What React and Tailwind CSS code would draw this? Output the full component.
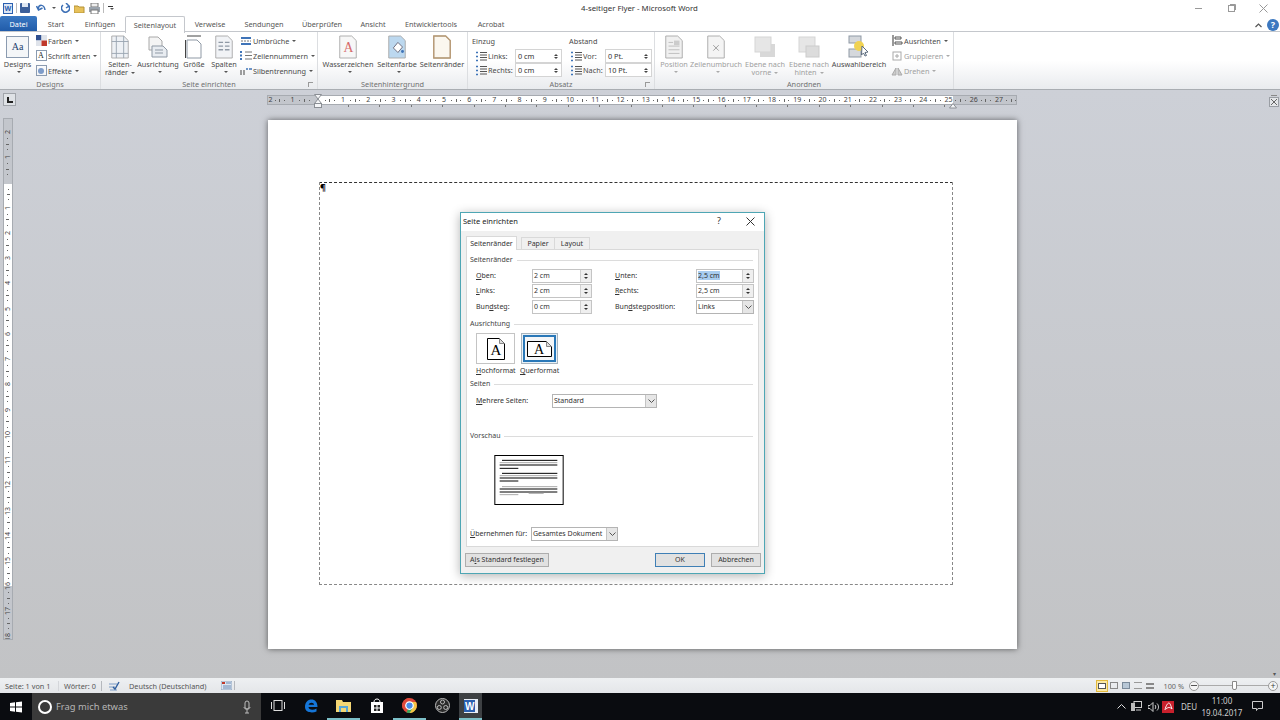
import React from 'react'

const ribbonTabs = [
  ['Start', 38], ['Einfügen', 50], ['Seitenlayout', 60], ['Verweise', 50], ['Sendungen', 58],
  ['Überprüfen', 58], ['Ansicht', 44], ['Entwicklertools', 72], ['Acrobat', 48],
]

const rulerNumbers = [2, 1, 0, 1, 2, 3, 4, 5, 6, 7, 8, 9, 10, 11, 12, 13, 14, 15, 16, 17, 18, 19, 20, 21, 22, 23, 24, 25, 26, 27]
const tabStops = Array.from({ length: 20 }, (_, i) => i)
const sideNumbers = [2, 1, 0, 1, 2, 3, 4, 5, 6, 7, 8, 9, 10, 11, 12, 13, 14, 15, 16, 17, 18]

function Caret({ muted }) {
  return <span className={`inline-block ml-[3px] align-middle border-x-[2px] border-t-[2px] border-x-transparent ${muted ? 'border-t-[#aaa]' : 'border-t-[#555]'}`} />
}

function Doc({ fold = '#fff', children }) {
  return (
    <svg width="22" height="24" viewBox="0 0 24 26">
      <path d="M3 1h13l5 5v19H3z" fill={fold} stroke="#a8a8a8" />
      {children}
    </svg>
  )
}

function BigButton({ w, lines, arrow, disabled, children }) {
  return (
    <div className={`flex flex-col items-center shrink-0 whitespace-nowrap ${disabled ? 'text-[#a0a0a0]' : 'text-[#4a4a4a]'}`} style={{ width: w }}>
      <div className="h-[26px] flex items-center justify-center">{children}</div>
      {lines.map((line, i) => (
        <div key={i} className="leading-[8px] h-[8px]">{line}{arrow && i === lines.length - 1 && lines.length > 1 ? <Caret muted={disabled} /> : null}</div>
      ))}
      {arrow && lines.length === 1 ? <div className="h-[6px] leading-[6px]"><Caret muted={disabled} /></div> : null}
    </div>
  )
}

function SmallItem({ icon, label, disabled }) {
  return (
    <div className={`h-[15px] flex items-center whitespace-nowrap ${disabled ? 'text-[#a0a0a0]' : 'text-[#4a4a4a]'}`}>
      <span className="w-[12px] h-[13px] mr-[1px] flex items-center justify-center shrink-0">{icon}</span>
      {label}<Caret muted={disabled} />
    </div>
  )
}

function Group({ w, label, launcher, children }) {
  return (
    <div className="h-[57px] flex flex-col border-r border-[#dcdee1] shrink-0 relative" style={{ width: w }}>
      <div className="h-[47px] pt-[2px] flex">{children}</div>
      <div className="h-[10px] leading-[10px] text-center text-[#707070]">{label}</div>
      {launcher ? <span className="absolute right-[4px] bottom-[2px] w-[5px] h-[5px] border-l border-t border-[#999]" /> : null}
    </div>
  )
}

function RibbonSpin({ value }) {
  return (
    <div className="w-[47px] h-[14px] border border-[#d4d4d4] bg-white flex items-center pl-[2px] text-[#333]">
      <span className="flex-1">{value}</span>
      <span className="w-[10px] flex flex-col items-center gap-[1px]">
        <span className="border-x-[2px] border-b-[2px] border-x-transparent border-b-[#444]" />
        <span className="border-x-[2px] border-t-[2px] border-x-transparent border-t-[#444]" />
      </span>
    </div>
  )
}

function LinesIcon({ color = '#555' }) {
  return (
    <svg width="12" height="11" viewBox="0 0 12 11">
      <path d="M1 1.5h2M1 5.5h2M1 9.5h2" stroke="#3f74b8" strokeWidth="1.4" />
      <path d="M5 1.5h7M5 4h7M5 6.5h7M5 9h7" stroke={color} />
    </svg>
  )
}

function Ribbon() {
  const dim = '#bbb'
  return (
    <div className="h-[58px] flex border-b border-[#a9adb2] bg-gradient-to-b from-white via-white to-[#e9ebee]">
      <Group w={101} label="Designs">
        <BigButton w={35} lines={['Designs']} arrow>
          <div className="w-[23px] h-[22px] border border-[#8b9bb0] bg-[#f4f6f8] flex items-center justify-center text-[10px] leading-none font-['Liberation_Serif',serif] text-[#24406d]">Aa</div>
        </BigButton>
        <div className="flex flex-col -mt-[1px]">
          <SmallItem label="Farben" icon={<svg width="11" height="11"><rect width="5.5" height="5.5" fill="#2f4f8f" /><rect x="5.5" width="5.5" height="5.5" fill="#dfe3ea" /><rect y="5.5" width="5.5" height="5.5" fill="#dfe3ea" /><rect x="5.5" y="5.5" width="5.5" height="5.5" fill="#c0392b" /></svg>} />
          <SmallItem label="Schrift arten" icon={<span className="w-[11px] h-[11px] border border-[#8b9bb0] text-[8px] leading-[10px] text-center font-['Liberation_Serif',serif] text-[#222]">A</span>} />
          <SmallItem label="Effekte" icon={<span className="w-[11px] h-[11px] border border-[#8b9bb0] flex items-center justify-center"><span className="w-[6px] h-[6px] rounded-full bg-[#7e9cc9]" /></span>} />
        </div>
      </Group>

      <Group w={217} label="Seite einrichten" launcher>
        <BigButton w={38} lines={['Seiten-', 'ränder']} arrow>
          <Doc fold="#eef1f5"><path d="M3 7h18M3 20h18M8 1v24M16 1v24" stroke="#9aa5b1" /></Doc>
        </BigButton>
        <BigButton w={38} lines={['Ausrichtung']} arrow>
          <svg width="20" height="22" viewBox="0 0 20 22"><path d="M1 1h9l4 4v9H1z" fill="#f4f4f4" stroke="#a8a8a8" /><path d="M4 10h11l4 4v7H4z" fill="#e8ecf1" stroke="#8f99a5" /><path d="M7 14h8M7 17h8" stroke="#8f99a5" /></svg>
        </BigButton>
        <BigButton w={34} lines={['Größe']} arrow>
          <svg width="18" height="24" viewBox="0 0 18 24"><path d="M2 1h14" stroke="#444" /><path d="M2 5h10l4 4v14H2z" fill="#fff" stroke="#8f99a5" /><path d="M.5 5v18" stroke="#444" /></svg>
        </BigButton>
        <BigButton w={26} lines={['Spalten']} arrow>
          <Doc fold="#f1f3f6"><path d="M6 8h5M6 12h5M6 16h5M13 8h5M13 12h5M13 16h5" stroke="#8f99a5" strokeWidth="1.5" /></Doc>
        </BigButton>
        <div className="flex flex-col pl-[3px] -mt-[1px]">
          <SmallItem label="Umbrüche" icon={<svg width="12" height="10"><path d="M1 2h10M1 8h10" stroke="#3f74b8" strokeWidth="2" /><path d="M1 5h10" stroke="#777" strokeDasharray="2 1" /></svg>} />
          <SmallItem label="Zeilennummern" icon={<svg width="12" height="11"><path d="M5 2h7M5 5.5h7M5 9h7" stroke="#777" /><path d="M1 1v9" stroke="#3f74b8" strokeWidth="2" strokeDasharray="2 1.5" /></svg>} />
          <SmallItem label="Silbentrennung" icon={<svg width="12" height="10"><path d="M1 9V4M4 9V4" stroke="#444" /><path d="M6 3h2M9 3h3" stroke="#3f74b8" strokeWidth="1.4" /></svg>} />
        </div>
      </Group>

      <Group w={150} label="Seitenhintergrund">
        <BigButton w={60} lines={['Wasserzeichen']} arrow>
          <Doc fold="#f7f7f7"><text x="7" y="19" fontSize="15" fill="#d66a6a" fontFamily="Liberation Serif">A</text></Doc>
        </BigButton>
        <BigButton w={38} lines={['Seitenfarbe']} arrow>
          <Doc fold="#bcd8ef"><path d="M8 14l5-6 5 5-5 6z" fill="#fff" stroke="#667" /><circle cx="18" cy="18" r="1.6" fill="#3f74b8" /></Doc>
        </BigButton>
        <BigButton w={52} lines={['Seitenränder']}>
          <Doc fold="#fbf7ef"><path d="M3 1h13l5 5v19H3z" fill="none" stroke="#b89a74" strokeWidth="1.5" /></Doc>
        </BigButton>
      </Group>

      <Group w={187} label="Absatz" launcher>
        <div className="w-[97px] shrink-0">
          <div className="h-[15px] leading-[15px] pl-[4px] text-[#4a4a4a]">Einzug</div>
          <div className="h-[14px] flex items-center pl-[7px] text-[#4a4a4a]"><span className="w-[12px]"><LinesIcon /></span><span className="w-[28px] pl-[1px]">Links:</span><RibbonSpin value="0 cm" /></div>
          <div className="h-[14px] flex items-center pl-[7px] text-[#4a4a4a]"><span className="w-[12px]"><LinesIcon /></span><span className="w-[28px] pl-[1px]">Rechts:</span><RibbonSpin value="0 cm" /></div>
        </div>
        <div className="w-[89px] shrink-0">
          <div className="h-[15px] leading-[15px] pl-[4px] text-[#4a4a4a]">Abstand</div>
          <div className="h-[14px] flex items-center pl-[5px] text-[#4a4a4a]"><span className="w-[12px]"><LinesIcon /></span><span className="w-[23px] pl-[1px]">Vor:</span><RibbonSpin value="0 Pt." /></div>
          <div className="h-[14px] flex items-center pl-[5px] text-[#4a4a4a]"><span className="w-[12px]"><LinesIcon /></span><span className="w-[23px] pl-[1px]">Nach:</span><RibbonSpin value="10 Pt." /></div>
        </div>
      </Group>

      <Group w={299} label="Anordnen">
        <BigButton w={38} lines={['Position']} arrow disabled>
          <Doc fold="#f0f0f0"><path d="M6 8h5M6 12h12M6 16h12M6 20h12" stroke={dim} /><rect x="12" y="6" width="6" height="5" fill="#ccc" /></Doc>
        </BigButton>
        <BigButton w={46} lines={['Zeilenumbruch']} arrow disabled>
          <Doc fold="#f4f4f4"><path d="M9 11l6 6M15 11l-6 6" stroke="#999" /></Doc>
        </BigButton>
        <BigButton w={52} lines={['Ebene nach', 'vorne']} arrow disabled>
          <svg width="22" height="22"><rect x="6" y="8" width="15" height="13" fill="#d8d8d8" /><rect x="1" y="1" width="16" height="15" fill="#e6e6e6" stroke="#d5d5d5" /></svg>
        </BigButton>
        <BigButton w={36} lines={['Ebene nach', 'hinten']} arrow disabled>
          <svg width="22" height="22"><rect x="1" y="1" width="16" height="15" fill="#e6e6e6" stroke="#d5d5d5" /><rect x="8" y="10" width="13" height="11" fill="#dcdcdc" stroke="#ccc" /></svg>
        </BigButton>
        <BigButton w={64} lines={['Auswahlbereich']}>
          <svg width="22" height="24" viewBox="0 0 22 24"><rect x="1" y="1" width="12" height="7" fill="#d5d8dc" stroke="#8f99a5" /><rect x="1" y="14" width="12" height="8" fill="#d5d8dc" stroke="#8f99a5" /><circle cx="11" cy="11" r="5" fill="#f0d252" /><path d="M14 11l6 6-3 .5 1.5 3-1.5.5-1.5-3-2 2z" fill="#fff" stroke="#5b6b7d" /></svg>
        </BigButton>
        <div className="flex flex-col -mt-[1px]">
          <SmallItem label="Ausrichten" icon={<svg width="11" height="11"><path d="M1 0v11" stroke="#333" /><path d="M3 2h6v2H3zM3 7h7v2H3z" fill="#fff" stroke="#555" /></svg>} />
          <SmallItem label="Gruppieren" disabled icon={<svg width="12" height="12"><rect x="2" y="2" width="8" height="8" fill="none" stroke="#aaa" /><path d="M4 6h4M6 4v4" stroke="#aaa" /></svg>} />
          <SmallItem label="Drehen" disabled icon={<svg width="12" height="11"><path d="M1 10l4-7v7zM7 10V3l4 7z" fill="#ccc" stroke="#aaa" /></svg>} />
        </div>
      </Group>
    </div>
  )
}

function Rulers() {
  return (
    <div className="w-[750px] relative">
      <div className="relative h-[10px] mt-[5px] border border-[#a7abb1] bg-white overflow-hidden flex">
        <div className="absolute left-0 top-0 bottom-0 w-[50px] bg-[#c3c6cc]" />
        <div className="absolute right-0 top-0 bottom-0 w-[63px] bg-[#c3c6cc]" />
        <div className="relative flex text-[7px] leading-[8px] text-[#444]">
          {rulerNumbers.map((n, i) => (
            <div key={i} className="shrink-0 flex items-center" style={{ width: i === 0 ? 19.5 : 25.24 }}>
              <span className={i === 0 ? 'w-[5px] text-center' : 'w-[10px] text-center'}>{n === 0 ? '' : n}</span>
              <span className="flex-1 flex justify-around items-center pr-[1px]">
                <span className="w-[1px] h-[1px] bg-[#666]" />
                <span className="w-[1px] h-[3px] bg-[#666]" />
                <span className="w-[1px] h-[1px] bg-[#666]" />
              </span>
            </div>
          ))}
        </div>
      </div>
      <svg width="8" height="14" className="absolute left-[47px] top-[-1px]">
        <path d="M.5.5h7L4 5zM4 5l3.500 4.500h-7z" fill="#f4f5f7" stroke="#8a8e94" />
        <rect x=".5" y="9.500" width="7" height="4" fill="#f4f5f7" stroke="#8a8e94" />
      </svg>
      <svg width="8" height="6" className="absolute left-[682px] top-[8px]">
        <path d="M4 .5l3.500 4.500h-7z" fill="#f4f5f7" stroke="#8a8e94" />
      </svg>
      <div className="h-[15px] pl-[81px] flex items-start">
        {tabStops.map((i) => (
          <div key={i} className="w-[31.4px] shrink-0"><span className="block w-[1px] h-[2px] bg-[#777]" /></div>
        ))}
      </div>
    </div>
  )
}

function SideRuler() {
  return (
    <div className="w-[10px] h-[522px] border border-[#a7abb1] bg-[#c3c6cc] mt-[12px] ml-[3px] overflow-hidden flex flex-col relative">
      <div className="absolute left-0 right-0 top-[65px] h-[402px] bg-white" />
      <div className="relative flex flex-col items-center text-[7px] leading-[8px] text-[#444] pt-[9px]">
        {sideNumbers.map((n, i) => (
          <div key={i} className="h-[25.24px] shrink-0 flex flex-col items-center">
            <span className="h-[8px] -rotate-90">{n === 0 ? '' : n}</span>
            <span className="flex-1 flex flex-col justify-around items-center pb-[1px]">
              <span className="w-[1px] h-[1px] bg-[#666]" />
              <span className="w-[3px] h-[1px] bg-[#666]" />
              <span className="w-[1px] h-[1px] bg-[#666]" />
            </span>
          </div>
        ))}
      </div>
    </div>
  )
}

function Heading({ children }) {
  return (
    <div className="h-[10px] flex items-center gap-[4px] pr-[5px] text-[#444]">
      <span className="whitespace-nowrap">{children}</span>
      <span className="flex-1 h-[1px] bg-[#dcdcdc]" />
    </div>
  )
}

function Spinner({ value, w, selected }) {
  return (
    <div className="h-[14px] border border-[#c4c4c4] bg-white flex items-center text-[#333]" style={{ width: w }}>
      <span className="flex-1 pl-[1px]"><span className={selected ? 'bg-[#a9cdf0]' : ''}>{value}</span></span>
      <span className="w-[11px] h-full border-l border-[#d0d0d0] bg-[#efefef] flex flex-col items-center justify-center gap-[2px]">
        <span className="border-x-[2px] border-b-[2px] border-x-transparent border-b-[#333]" />
        <span className="border-x-[2px] border-t-[2px] border-x-transparent border-t-[#333]" />
      </span>
    </div>
  )
}

function Combo({ value, w }) {
  return (
    <div className="h-[14px] border border-[#b4b4b4] bg-white flex items-center text-[#333] whitespace-nowrap" style={{ width: w }}>
      <span className="flex-1 pl-[1px]">{value}</span>
      <span className="w-[11px] h-full border-l border-[#c4c4c4] bg-[#e6e6e6] flex items-center justify-center">
        <svg width="7" height="4"><path d="M.5.5l3 3 3-3" fill="none" stroke="#555" /></svg>
      </span>
    </div>
  )
}

function DialogButton({ w, primary, children }) {
  return (
    <div className={`h-[14px] flex items-center justify-center border bg-[#e1e1e1] text-[#333] whitespace-nowrap ${primary ? 'border-[#3f7fb5]' : 'border-[#adadad]'}`} style={{ width: w }}>{children}</div>
  )
}

function PageDialog() {
  return (
    <div className="absolute left-[192px] top-[92px] w-[305px] h-[362px] border border-[#4ea6b4] bg-[#f0f0f0] shadow-[0_2px_10px_rgba(0,0,0,0.3)] flex flex-col text-[#333] text-[7px]">
      <div className="h-[18px] bg-white flex items-center pl-[2px] pb-[2px] shrink-0">
        <span className="flex-1 text-[#222] text-[7.5px]">Seite einrichten</span>
        <span className="w-[30px] mr-[2px] text-center text-[9px]">?</span>
        <span className="w-[28px] flex justify-center">
          <svg width="9" height="9"><path d="M.5.5l8 8M8.500.5l-8 8" stroke="#333" /></svg>
        </span>
      </div>

      <div className="flex-1 px-[5px] pt-[5px] flex flex-col">
        <div className="h-[13px] flex items-end">
          <div className="h-[14px] w-[51px] bg-white border border-b-0 border-[#d9d9d9] flex items-center justify-center relative z-10 -mb-[1px]">Seitenränder</div>
          <div className="h-[12px] w-[34px] ml-[4px] border border-b-0 border-[#d9d9d9] flex items-center justify-center">Papier</div>
          <div className="h-[12px] w-[35px] border border-b-0 border-l-0 border-[#d9d9d9] flex items-center justify-center">Layout</div>
        </div>
        <div className="h-[298px] bg-white border border-[#d9d9d9] pl-[3px] pt-[5px]">
          <Heading>Seitenränder</Heading>
          <div className="mt-[4px] pl-[6px] flex flex-col gap-[1px]">
            <div className="flex items-center">
              <span className="w-[56px]"><u>O</u>ben:</span><Spinner value="2 cm" w={60} />
              <span className="w-[81px] pl-[23px] box-content"><u>U</u>nten:</span><Spinner value="2,5 cm" w={58} selected />
            </div>
            <div className="flex items-center">
              <span className="w-[56px]"><u>L</u>inks:</span><Spinner value="2 cm" w={60} />
              <span className="w-[81px] pl-[23px] box-content"><u>R</u>echts:</span><Spinner value="2,5 cm" w={58} />
            </div>
            <div className="flex items-center mt-[1px]">
              <span className="w-[56px]">Bun<u>d</u>steg:</span><Spinner value="0 cm" w={60} />
              <span className="w-[81px] pl-[23px] box-content">Bun<u>d</u>stegposition:</span><Combo value="Links" w={58} />
            </div>
          </div>

          <div className="mt-[5px]"><Heading>Ausrichtung</Heading></div>
          <div className="mt-[4px] pl-[6px] flex gap-[6px]">
            <div className="w-[39px] h-[31px] border border-[#c4c4c4] bg-white flex items-center justify-center">
              <svg width="18" height="22" viewBox="0 0 18 22">
                <path d="M.5.500h12l5 5v16H.5z" fill="#fff" stroke="#000" />
                <path d="M12.500.500v5h5" fill="#ddd" stroke="#888" />
                <text x="9" y="17" textAnchor="middle" fontSize="15" fontFamily="Liberation Serif" fill="#000">A</text>
              </svg>
            </div>
            <div className="w-[37px] h-[31px] border border-[#a8b4be] bg-[#e8f1f8] flex items-center justify-center">
              <div className="w-[33px] h-[27px] border-2 border-[#2a78b8] bg-[#f4f6f8] flex items-center justify-center">
                <svg width="25" height="16" viewBox="0 0 25 16">
                  <path d="M.5.500h19l5 5v10H.5z" fill="#fff" stroke="#000" />
                  <path d="M19.500.500v5h5" fill="#ddd" stroke="#888" />
                  <text x="12" y="13" textAnchor="middle" fontSize="14" fontFamily="Liberation Serif" fill="#000">A</text>
                </svg>
              </div>
            </div>
          </div>
          <div className="h-[10px] mt-[2px] pl-[6px] flex leading-[10px] whitespace-nowrap">
            <span className="w-[44px]"><u>H</u>ochformat</span>
            <span><u>Q</u>uerformat</span>
          </div>

          <div className="mt-[3px]"><Heading>Seiten</Heading></div>
          <div className="mt-[5px] pl-[6px] flex items-center">
            <span className="w-[76px]"><u>M</u>ehrere Seiten:</span><Combo value="Standard" w={105} />
          </div>

          <div className="mt-[23px]"><Heading>Vorschau</Heading></div>
          <div className="mt-[14px] ml-[24px] w-[70px] h-[50px]">
            <svg width="70" height="50" viewBox="117 225 208 150" className="block">
              <rect x="118.5" y="226.5" width="205" height="147" fill="#fff" stroke="#000" strokeWidth="3" />
              <path d="M140 241h166M133 255h173M133 265h56M140 280h166M133 294h173M133 303h56M133 327h173M133 336h173" stroke="#000" strokeWidth="3" />
              <path d="M133 248h173M133 287h173M140 320h166M133 344h56M220 340h45" stroke="#aaa" strokeWidth="3" />
            </svg>
          </div>
          <div className="mt-[22px] flex items-center">
            <span className="w-[61px] whitespace-nowrap"><u>Ü</u>bernehmen für:</span><Combo value="Gesamtes Dokument" w={87} />
          </div>
        </div>
        <div className="pt-[6px] flex -ml-[1px] -mr-[2px]">
          <DialogButton w={84}>A<u>l</u>s Standard festlegen</DialogButton>
          <div className="ml-auto flex gap-[6px]">
            <DialogButton w={50} primary>OK</DialogButton>
            <DialogButton w={50}>Abbrechen</DialogButton>
          </div>
        </div>
      </div>
    </div>
  )
}

function Workspace() {
  return (
    <div className="h-[588px] flex bg-gradient-to-b from-[#cdd0d7] to-[#c2c3c5]">
      <div className="w-[267px] shrink-0">
        <div className="mt-[3px] ml-[3px] w-[13px] h-[13px] border border-[#a0a4aa] bg-[#dfe2e6] flex items-center justify-center">
          <span className="w-[6px] h-[6px] border-l-2 border-b-2 border-[#222]" />
        </div>
        <SideRuler />
      </div>
      <div className="w-[750px] shrink-0">
        <Rulers />
        <div className="relative ml-[1px] h-[529px] bg-white shadow-[0_0_6px_rgba(0,0,0,0.55)] pt-[62px] pl-[51px] pr-[64px]">
          <div className="h-[403px] border border-dashed border-[#888] border-t-[#333]">
            <div className="text-[9px] leading-[10px] font-bold text-black">¶</div>
          </div>
          <PageDialog />
        </div>
      </div>
      <div className="flex-1 flex flex-col items-end pr-[1px] pt-[5px]">
        <svg width="10" height="12"><rect x=".5" y="2.5" width="9" height="9" fill="#e4e6e9" stroke="#9a9ea4" /><path d="M2 4l6 6M8 4l-6 6" stroke="#666" /><path d="M2 .5h6" stroke="#888" /></svg>
        <div className="mt-auto mb-[1px] mr-[3px] text-[6px] leading-[6px] text-[#555]">▾</div>
      </div>
    </div>
  )
}

function StatusBar() {
  return (
    <div className="h-[15px] flex items-center bg-gradient-to-b from-[#eef0f2] to-[#e4e6e9] text-[#555] whitespace-nowrap">
      <span className="w-[58px] pl-[5px]">Seite: 1 von 1</span>
      <span className="w-[43px] pl-[5px] border-l border-[#d4d6da]">Wörter: 0</span>
      <span className="w-[27px] pl-[6px] border-l border-[#b5b8bd]">
        <svg width="12" height="10"><path d="M1 3h8M1 6h6M2 9h7" stroke="#7d9cc5" /><path d="M5 6l2 2 4-7" fill="none" stroke="#2f5f9f" strokeWidth="1.4" /></svg>
      </span>
      <span className="w-[91px] pl-[1px]">Deutsch (Deutschland)</span>
      <span className="w-[16px] flex justify-center border-r border-[#b5b8bd] pr-[1px]">
        <svg width="11" height="9"><rect width="11" height="9" fill="#dce6f2" stroke="#8fa5bf" /><rect x="1" y="1" width="3" height="2" fill="#c0392b" /><path d="M5 2h5M2 5h8M2 7h8" stroke="#6d8cb5" /></svg>
      </span>

      <div className="ml-auto flex items-center pr-[2px]">
        <span className="w-[12px] h-[12px] border border-[#e3b93c] bg-[#fbe9a8] flex items-center justify-center">
          <span className="w-[8px] h-[6px] border border-[#555] bg-white" />
        </span>
        <span className="w-[12px] flex justify-center"><span className="w-[8px] h-[7px] border border-[#888]" /></span>
        <span className="w-[12px] flex justify-center"><span className="w-[8px] h-[7px] border border-[#7a8a9a] bg-[#b7c7d6]" /></span>
        <span className="w-[12px] flex justify-center"><span className="w-[8px] h-[7px] border-y border-[#999]" /></span>
        <span className="w-[12px] flex justify-center"><span className="w-[8px] h-[6px] border-y-2 border-[#888]" /></span>
        <span className="w-[33px] text-right pr-[5px] text-[#666]">100 %</span>
        <div className="w-[89px] flex items-center">
          <span className="w-[10px] h-[10px] rounded-full border border-[#999] bg-[#f5f5f5] flex items-center justify-center"><span className="w-[6px] h-[1px] bg-[#555]" /></span>
          <div className="flex-1 h-[1px] bg-[#aaa] flex items-center pl-[33px]">
            <span className="w-[5px] h-[9px] bg-white border border-[#888] rounded-b-[2px] shrink-0" />
          </div>
          <span className="w-[10px] h-[10px] rounded-full border border-[#999] bg-[#f5f5f5] flex items-center justify-center text-[9px] leading-none text-[#444]">+</span>
        </div>
      </div>
    </div>
  )
}

function TaskIcon({ w = 33, running, active, children }) {
  return (
    <div className={`h-full flex items-center justify-center shrink-0 border-b-2 ${running ? 'border-[#7cc0c8]' : 'border-transparent'} ${active ? 'bg-[#3d4043]' : ''}`} style={{ width: w }}>{children}</div>
  )
}

function Taskbar() {
  return (
    <div className="h-[27px] bg-[#0a0c10] flex text-[#cfcfcf]">
      <div className="w-[32px] flex items-center justify-center shrink-0">
        <svg width="12" height="12"><path d="M0 2l5-.7V5.6H0zM6 1.2L12 .4v5.2H6zM0 6.4h5v4.3L0 10zM6 6.4h6v5.2l-6-.8z" fill="#fff" /></svg>
      </div>
      <div className="w-[229px] bg-[#3a3a3a] flex items-center pl-[6px] shrink-0">
        <span className="w-[14px] h-[14px] rounded-full border-2 border-white shrink-0" />
        <span className="ml-[4px] text-[9.400px] text-[#b5b5b5] flex-1">Frag mich etwas</span>
        <svg width="8" height="14" className="mr-[10px]"><rect x="2" y="1" width="4" height="8" rx="2" fill="none" stroke="#bbb" /><path d="M1 7c0 3 6 3 6 0M4 10v3M2 13h4" fill="none" stroke="#bbb" /></svg>
      </div>
      <TaskIcon><svg width="14" height="11"><rect x="3" y=".5" width="8" height="10" fill="none" stroke="#ddd" /><path d="M.5 2v7M13.500 2v7" stroke="#ddd" /></svg></TaskIcon>
      <TaskIcon>
        <svg width="14" height="14" viewBox="0 0 14 14"><path d="M1 8C1 3 4 .5 7.500 .5 11 .5 13.500 3 13.500 8H4.500c.3 3 4.500 3.500 8 1.500v3C8 14.500 1 13.500 1 8zM4.600 5.800h5.500C10 3 5.200 3 4.600 5.800z" fill="#1576d8" /></svg>
      </TaskIcon>
      <TaskIcon running>
        <svg width="15" height="13"><path d="M0 1h6l1 2h8v10H0z" fill="#f4d774" /><rect x="3" y="7" width="9" height="6" fill="#58a6d6" /><rect x="5" y="9" width="5" height="4" fill="#f4d774" /></svg>
      </TaskIcon>
      <TaskIcon>
        <svg width="14" height="15"><path d="M1 4h12v11H1z" fill="#fff" /><path d="M4 4c0-4 6-4 6 0" fill="none" stroke="#fff" /><rect x="4" y="7" width="2.500" height="2.500" fill="#222" /><rect x="7.500" y="7" width="2.500" height="2.500" fill="#222" /><rect x="4" y="10.500" width="2.500" height="2.500" fill="#222" /><rect x="7.500" y="10.500" width="2.500" height="2.500" fill="#222" /></svg>
      </TaskIcon>
      <TaskIcon running>
        <svg width="15" height="15" viewBox="0 0 30 30"><circle cx="15" cy="15" r="15" fill="#e04a3c" /><path d="M15 15L28 22A15 15 0 0 1 9 29z" fill="#3ba55c" /><path d="M15 15L2 22A15 15 0 0 1 15 0h0A15 15 0 0 1 2 8z" fill="#e04a3c" /><path d="M15 8h13A15 15 0 0 1 15 30l7-11z" fill="#f6c544" /><circle cx="15" cy="15" r="7.500" fill="#4a8ce8" stroke="#fff" strokeWidth="2.500" /></svg>
      </TaskIcon>
      <TaskIcon>
        <svg width="15" height="15" viewBox="0 0 15 15"><circle cx="7.500" cy="7.500" r="7" fill="#2a2a2a" stroke="#bbb" /><circle cx="7.500" cy="4" r="2" fill="none" stroke="#bbb" /><circle cx="4.300" cy="9.500" r="2" fill="none" stroke="#bbb" /><circle cx="10.700" cy="9.500" r="2" fill="none" stroke="#bbb" /></svg>
      </TaskIcon>
      <TaskIcon w={23} running active>
        <svg width="14" height="14"><rect width="14" height="14" fill="#e8eef7" /><rect width="11" height="12" y="1" fill="#2a5fb0" /><text x="1" y="10.500" fontSize="10" fontWeight="700" fill="#fff" fontFamily="Liberation Sans">W</text></svg>
      </TaskIcon>

      <div className="ml-auto flex items-center pr-[6px]">
        <span className="w-[16px] flex justify-center"><svg width="9" height="5"><path d="M.5 4.500l4-4 4 4" fill="none" stroke="#ddd" /></svg></span>
        <span className="w-[15px] flex justify-center"><svg width="11" height="11"><rect x="3" y=".5" width="7.500" height="6" fill="none" stroke="#ccc" /><rect x="0" y="2" width="4" height="8" fill="#bbb" /><path d="M5 9h5" stroke="#ccc" /></svg></span>
        <span className="w-[18px] flex justify-center"><svg width="11" height="10"><path d="M0 3.500h2l3-3v9l-3-3H0z" fill="none" stroke="#ccc" /><path d="M7 3c1 1 1 3 0 4M9 1.500c2 2 2 5 0 7" fill="none" stroke="#ccc" /></svg></span>
        <span className="w-[12px] h-[12px] bg-[#c8202c] flex items-center justify-center">
          <svg width="9" height="9"><path d="M1 8C2 3 4 1 5 1s2 3 3 6c-2-2-4-2-6 0" fill="none" stroke="#fff" /></svg>
        </span>
        <span className="w-[30px] text-center text-[8px]">DEU</span>
        <span className="w-[36px] text-center text-[8px] leading-[12px] whitespace-nowrap flex flex-col items-center"><span>11:00</span><span>19.04.2017</span></span>
        <span className="w-[34px] flex justify-center"><svg width="11" height="11"><path d="M.5.500h10v7H6l-1.500 2v-2H.5z" fill="none" stroke="#ccc" /></svg></span>
      </div>
    </div>
  )
}

export default function App() {
  return (
    <div className="w-[1280px] h-[720px] overflow-hidden bg-white font-['Noto_Sans',sans-serif] text-[7.300px] leading-[10px]">
      <div className="h-[16px] flex items-center relative">
        <div className="flex items-center gap-[3px] pl-[3px] w-[200px]">
          <span className="w-[10px] h-[11px] bg-[#dce6f4] border border-[#2a5fb0] text-[7px] leading-[9px] text-center font-bold text-[#2a5fb0]">W</span>
          <span className="w-[1px] h-[10px] bg-[#bbb]" />
          <svg width="10" height="10"><rect width="10" height="10" rx="1" fill="#3c5f9a" /><rect x="2" y="0" width="6" height="4" fill="#dfe7f2" /></svg>
          <svg width="10" height="10" className="ml-[3px]"><path d="M2 6c1-5 6-5 7 1M.5 3l2 4 4-2" fill="none" stroke="#3c6fb5" strokeWidth="1.500" /></svg>
          <Caret />
          <svg width="9" height="10" className="ml-[2px]"><path d="M2 2a4 4 0 1 0 6 1M5 0l3 3-3 2" fill="none" stroke="#3c6fb5" strokeWidth="1.500" /></svg>
          <svg width="11" height="10" className="ml-[1px]"><path d="M0 3h4l1 1h5v6H0z" fill="#e7c15a" stroke="#b59236" /></svg>
          <svg width="11" height="11" className="ml-[1px]"><rect x="2" y="0" width="7" height="4" fill="#eee" stroke="#777" /><rect y="4" width="11" height="5" fill="#9aa3ad" /><rect x="2" y="7" width="7" height="4" fill="#fff" stroke="#777" /></svg>
          <span className="w-[1px] h-[10px] bg-[#bbb]" />
          <span className="flex flex-col items-center gap-[1px]"><span className="w-[5px] h-[1px] bg-[#333]" /><Caret /></span>
        </div>
        <span className="absolute left-[581px] top-[3px] text-[7.800px] text-[#333] whitespace-nowrap">4-seitiger Flyer - Microsoft Word</span>
        <div className="ml-auto flex items-center text-[#777]">
          <span className="w-[33px] flex justify-center"><span className="w-[7px] h-[1px] bg-[#999]" /></span>
          <span className="w-[33px] flex justify-center"><svg width="8" height="8"><rect x=".5" y="1.500" width="6" height="6" fill="#fff" stroke="#999" /><path d="M2 .5h5.500V6" fill="none" stroke="#999" /></svg></span>
          <span className="w-[30px] flex justify-center mr-[2px]"><svg width="9" height="9"><path d="M.5.500l8 8M8.500.500l-8 8" stroke="#999" /></svg></span>
        </div>
      </div>

      <div className="h-[16px] flex items-end relative">
        <div className="w-[37px] h-[16px] bg-gradient-to-b from-[#3a78c2] to-[#1f5aa8] text-white flex items-center justify-center rounded-t-[2px]">Datei</div>
        {ribbonTabs.map(([label, w]) => (
          <div key={label} style={{ width: w }} className={`flex items-center justify-center text-[#555] ${label === 'Seitenlayout' ? 'border border-b-0 border-[#c4c7cc] rounded-t-[2px] bg-white relative z-10 -mb-[1px] h-[17px]' : 'h-[16px]'}`}>{label}</div>
        ))}
        <div className="absolute left-0 right-0 bottom-0 h-[1px] bg-[#c4c7cc]" />
        <div className="ml-auto flex items-center gap-[5px] pr-[1px] pb-[1px] relative">
          <svg width="7" height="5"><path d="M.5 4l3-3 3 3" fill="none" stroke="#555" strokeWidth="1.200" /></svg>
          <span className="w-[12px] h-[12px] rounded-full bg-[#3c78c0] text-white text-[9px] leading-[12px] font-bold text-center">?</span>
        </div>
      </div>

      <Ribbon />
      <Workspace />
      <StatusBar />
      <Taskbar />
    </div>
  )
}
